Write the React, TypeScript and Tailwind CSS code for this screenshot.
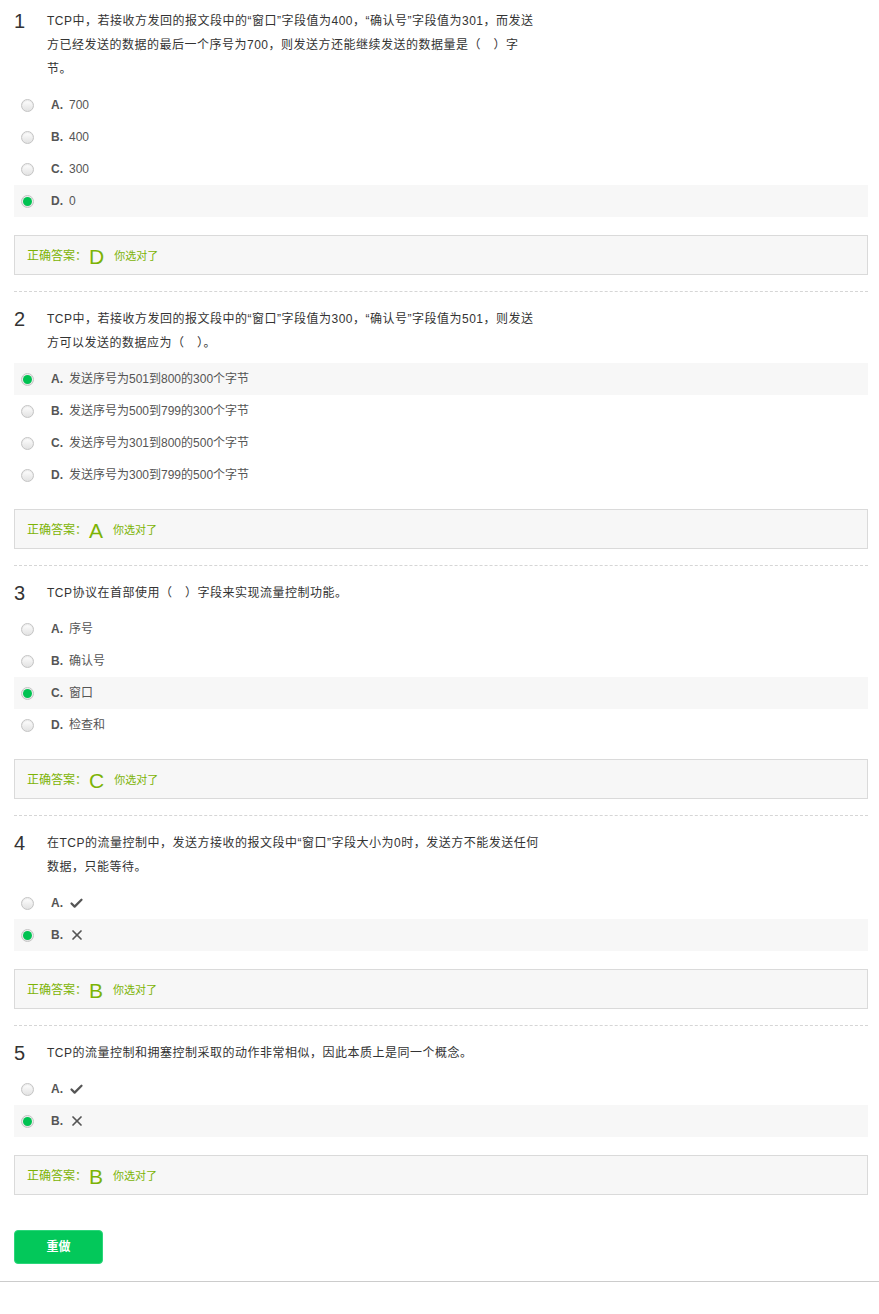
import React from 'react';
import { Check, X } from 'lucide-react';

type Opt = { key: string; text: React.ReactNode };
type Q = { no: number; text: string; options: Opt[]; chosen: string };

const tick = <Check className="inline-block h-[15px] w-[15px] text-[#555]" strokeWidth={3.6} />;
const cross = <X className="inline-block h-[16px] w-[16px] text-[#555]" strokeWidth={2.6} />;

const questions: Q[] = [
  {
    no: 1,
    text: 'TCP中，若接收方发回的报文段中的“窗口”字段值为400，“确认号”字段值为301，而发送方已经发送的数据的最后一个序号为700，则发送方还能继续发送的数据量是（　）字节。',
    options: [
      { key: 'A', text: '700' },
      { key: 'B', text: '400' },
      { key: 'C', text: '300' },
      { key: 'D', text: '0' },
    ],
    chosen: 'D',
  },
  {
    no: 2,
    text: 'TCP中，若接收方发回的报文段中的“窗口”字段值为300，“确认号”字段值为501，则发送方可以发送的数据应为（　）。',
    options: [
      { key: 'A', text: '发送序号为501到800的300个字节' },
      { key: 'B', text: '发送序号为500到799的300个字节' },
      { key: 'C', text: '发送序号为301到800的500个字节' },
      { key: 'D', text: '发送序号为300到799的500个字节' },
    ],
    chosen: 'A',
  },
  {
    no: 3,
    text: 'TCP协议在首部使用（　）字段来实现流量控制功能。',
    options: [
      { key: 'A', text: '序号' },
      { key: 'B', text: '确认号' },
      { key: 'C', text: '窗口' },
      { key: 'D', text: '检查和' },
    ],
    chosen: 'C',
  },
  {
    no: 4,
    text: '在TCP的流量控制中，发送方接收的报文段中“窗口”字段大小为0时，发送方不能发送任何数据，只能等待。',
    options: [
      { key: 'A', text: tick },
      { key: 'B', text: cross },
    ],
    chosen: 'B',
  },
  {
    no: 5,
    text: 'TCP的流量控制和拥塞控制采取的动作非常相似，因此本质上是同一个概念。',
    options: [
      { key: 'A', text: tick },
      { key: 'B', text: cross },
    ],
    chosen: 'B',
  },
];

const Radio: React.FC<{ on: boolean }> = ({ on }) => (
  <span className="flex h-[13px] w-[13px] items-center justify-center rounded-full border border-[#c4c4c4] bg-gradient-to-b from-[#ffffff] to-[#e2e2e2] shadow-[inset_0_1px_1px_rgba(0,0,0,0.08)]">
    {on && <span className="h-[9px] w-[9px] rounded-full bg-[#00c251]" />}
  </span>
);

const Question: React.FC<{ q: Q; first: boolean }> = ({ q, first }) => (
  <div className={first ? 'pt-[9px]' : 'pt-[15px]'}>
    <div className="flex">
      <div className="w-[33px] text-[20px] leading-[24px] text-[#333]">{q.no}</div>
      <div className="w-[494px] text-[12px] leading-[24px] tracking-[0.5px] text-[#333]">{q.text}</div>
    </div>
    <div className="mt-[8px]">
      {q.options.map((o) => (
        <div
          key={o.key}
          className={`flex h-[32px] items-center ${o.key === q.chosen ? 'bg-[#f7f7f7]' : ''}`}
        >
          <div className="pl-[7px] pr-[17px]">
            <Radio on={o.key === q.chosen} />
          </div>
          <span className="w-[18px] text-[12px] font-bold text-[#555]">{o.key}.</span>
          <span className="flex items-center text-[12px] text-[#555]">{o.text}</span>
        </div>
      ))}
    </div>
    <div className="mt-[18px] flex h-[40px] items-center border border-[#dadada] bg-[#f7f7f7] pl-[12px] pt-[2px] text-[#7cb305]">
      <span className="text-[12px]">正确答案：</span>
      <span className="ml-[2px] text-[21px] leading-none">{q.chosen}</span>
      <span className="ml-[10px] text-[11px]">你选对了</span>
    </div>
    {q.no !== 5 && <div className="mt-[16px] border-t border-dashed border-[#d6d6d6]" />}
  </div>
);

const App: React.FC = () => {
  return (
    <div
      className="min-h-[1314px] bg-white"
      style={{ fontFamily: '"Liberation Sans", Arial, "Noto Sans CJK SC", sans-serif' }}
    >
      <div className="w-[868px] pl-[14px]">
        {questions.map((q, i) => (
          <Question key={q.no} q={q} first={i === 0} />
        ))}
        <div className="pt-[35px]">
          <button className="h-[34px] w-[89px] rounded-[4px] border border-[#2bd67a] bg-[#03c85a] text-[12px] font-bold text-white">
            重做
          </button>
        </div>
      </div>
      <div className="mt-[17px] border-t border-[#cccccc]" />
    </div>
  );
};

export default App;
